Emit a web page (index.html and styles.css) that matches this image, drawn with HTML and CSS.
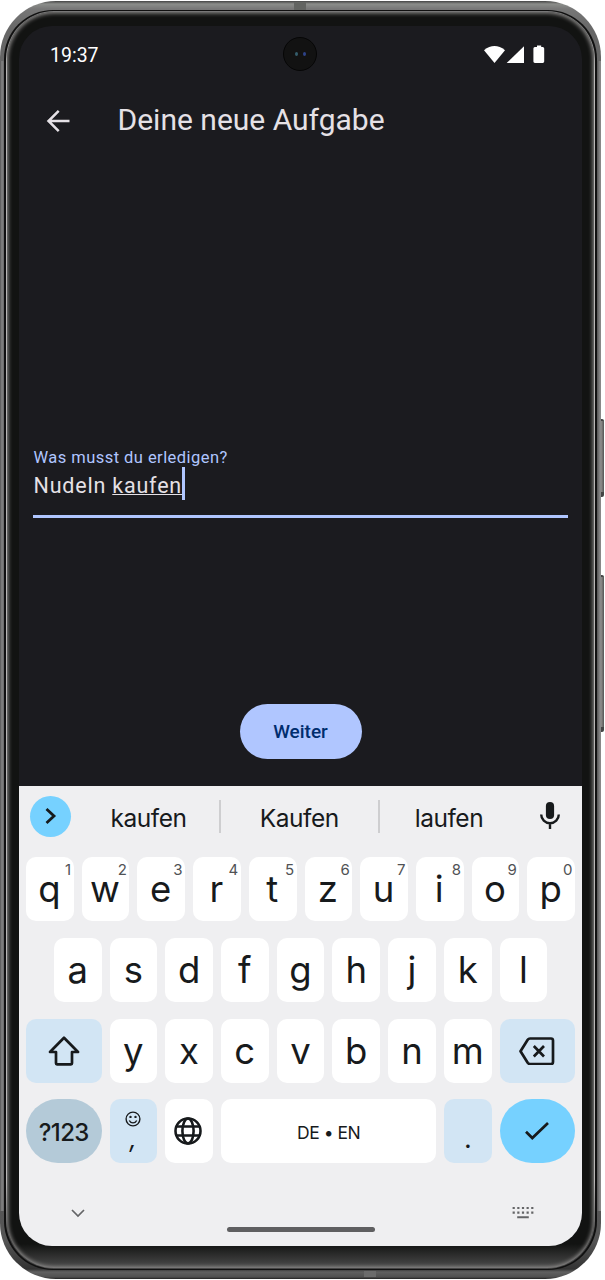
FILE: index.html
```html
<!DOCTYPE html>
<html lang="de">
<head>
<meta charset="utf-8">
<title>Deine neue Aufgabe</title>
<link rel="stylesheet" href="styles.css">
</head>
<body>
<div class="stage">
<div class="side-button power"></div>
<div class="side-button volume"></div>
<div class="phone"><span class="antenna top"></span><span class="antenna base"></span><div class="seam"><div class="rim"><div class="bezel">
<main class="screen">
  <div class="camera"><i></i><i></i></div>
  <header class="status">
    <span class="clock">19:37</span>
    <svg class="status-icons" width="62" height="20" viewBox="0 0 62 20" fill="#fff">
      <path d="M0 5.2Q10.500-3.200 21 5.200L10.500 18Z"/><path d="M40 1.200V18H22.700Z"/>
      <path d="M53 .400h4.200v1.500h1.500q1.500 0 1.500 1.500v13.200q0 1.400-1.500 1.400h-7.800q-1.500 0-1.500-1.400V3.400q0-1.500 1.500-1.500H53z"/>
    </svg>
  </header>
  <div class="appbar">
    <svg width="24" height="24" viewBox="0 0 24 24" fill="none" stroke="#e5e1e6" stroke-width="2.500"><path d="M23.500 12H3M12.700 1.800L2.500 12l10.200 10.200"/></svg>
    <h1>Deine neue Aufgabe</h1>
  </div>
  <section class="form">
    <div class="field">
      <label class="label">Was musst du erledigen?</label>
      <div class="value"><span class="typed">Nudeln <span class="composing">kaufen</span></span><span class="caret"></span></div>
    </div>
    <button class="next">Weiter</button>
  </section>
  <section class="keyboard">
    <div class="suggestions">
      <span class="expand"><svg width="12" height="18" viewBox="0 0 12 18" fill="none" stroke="#171a1c" stroke-width="2.800"><path d="M1.500 2L9 9l-7.500 7"/></svg></span>
      <span class="word">kaufen</span><span class="word">Kaufen</span><span class="word">laufen</span>
      <svg class="mic" width="20" height="28" viewBox="0 0 20 28"><rect x="5.900" y="0" width="8.200" height="17" rx="4.100" fill="#171a1c"/><path d="M1.200 12.500a8.800 8.800 0 0 0 17.600 0M10 21v6" fill="none" stroke="#171a1c" stroke-width="2.400"/></svg>
    </div>
    <div class="row">
      <div class="key">q<sup>1</sup></div><div class="key">w<sup>2</sup></div><div class="key">e<sup>3</sup></div><div class="key">r<sup>4</sup></div><div class="key">t<sup>5</sup></div><div class="key">z<sup>6</sup></div><div class="key">u<sup>7</sup></div><div class="key">i<sup>8</sup></div><div class="key">o<sup>9</sup></div><div class="key">p<sup>0</sup></div>
    </div>
    <div class="row inset">
      <div class="key">a</div><div class="key">s</div><div class="key">d</div><div class="key">f</div><div class="key">g</div><div class="key">h</div><div class="key">j</div><div class="key">k</div><div class="key">l</div>
    </div>
    <div class="row">
      <div class="key wide tint"><svg width="32" height="30" viewBox="0 0 32 30" fill="none" stroke="#171a1c" stroke-width="2.700" stroke-linejoin="round"><path d="M16 1.800L30 16H24V27.300q0 1-1 1H9q-1 0-1-1V16H2Z"/></svg></div>
      <div class="key">y</div><div class="key">x</div><div class="key">c</div><div class="key">v</div><div class="key">b</div><div class="key">n</div><div class="key">m</div>
      <div class="key wide tint"><svg width="36" height="28" viewBox="0 0 36 28" fill="none" stroke="#171a1c" stroke-width="2.700" stroke-linejoin="round"><path d="M11 1.500H32q2 0 2 2V25q0 2-2 2H11q-1.500 0-2.300-1.200L1.500 14.200 8.700 2.700Q9.500 1.500 11 1.500Z"/><path d="M14.800 9L25 19.500M25 9L14.800 19.500"/></svg></div>
    </div>
    <div class="row">
      <div class="key wide symbols">?123</div>
      <div class="key tint comma"><svg width="16" height="16" viewBox="0 0 16 16" fill="none" stroke="#171a1c" stroke-width="1.400"><circle cx="8" cy="8" r="6.900"/><path d="M4.300 9.500a4.100 4.100 0 0 0 7.400 0"/><circle cx="5.500" cy="5.900" r=".5"/><circle cx="10.500" cy="5.900" r=".5"/></svg><span>,</span></div>
      <div class="key globe"><svg width="28" height="28" viewBox="0 0 28 28" fill="none" stroke="#171a1c" stroke-width="2.600"><circle cx="14" cy="14" r="12.500"/><ellipse cx="14" cy="14" rx="5.600" ry="12.500"/><path d="M2 9.500H26M2 18.500H26"/></svg></div>
      <div class="key space">DE • EN</div>
      <div class="key tint period">.</div>
      <div class="key wide enter"><svg width="26" height="20" viewBox="0 0 26 20" fill="none" stroke="#171a1c" stroke-width="2.700"><path d="M2 10.700L8.300 17 24 2"/></svg></div>
    </div>
    <div class="bottom">
      <svg class="hide" width="14" height="9" viewBox="0 0 14 9" fill="none" stroke="#646567" stroke-width="1.700"><path d="M1 1l6 6 6-6"/></svg>
      <span class="home"></span>
      <svg class="switch" width="22" height="13" viewBox="0 0 22 13" fill="none" stroke="#646567" stroke-width="2.200"><path d="M.600 2H22M.600 6.700H22" stroke-dasharray="2.200 2.450"/><path d="M5.200 11.200H16.800" stroke-width="2"/></svg>
    </div>
  </section>
</main>
</div></div></div></div>
</div>
</body>
</html>
```
FILE: styles.css
```css
* { box-sizing: border-box; }
body { margin: 0; background: #fff; font-family: Roboto, "Liberation Sans", sans-serif; }
.stage { position: relative; width: 605px; height: 1280px; padding: 1px 4px 1px 0; overflow: hidden; }
.side-button { position: absolute; left: 599px; width: 5px; border-radius: 2px; background: linear-gradient(90deg, #333, #8b8987 45%, #555); border: solid #444; border-width: 2px 0 5px; }
.power { top: 419px; height: 78px; }
.volume { top: 575px; height: 157px; }
.phone { position: relative; height: 1278px; padding: 9px 4px 9px 4px; border-radius: 56px; background: linear-gradient(90deg, #555 0, #858585 2px, #666 4px, transparent 5px, transparent 596px, #555 597px, #888 600px) 0 60px / 100% 1150px no-repeat, linear-gradient(#444 0, #8b8d8a 3px, #777 8px, #666 30px, #555 1240px, #333 1268px, #606060 1271px, #505050 1276px, #222); }
.antenna { position: absolute; width: 12px; background: #626461; }
.top { left: 294px; top: 1px; height: 8px; }
.base { left: 364px; bottom: 2px; height: 6px; background: #6b6b6b; }
.seam { height: 100%; padding: 1px 2px 1px 1.500px; border-radius: 49px; background: #101010; }
.rim { height: 100%; padding: 1px; border-radius: 48px; background: linear-gradient(#777 0, #777 20px, #b9b7b6 60px, #b9b7b6 1170px, #444 1230px); }
.bezel { height: 100%; padding: 14px 7px 20px 12.500px; border-radius: 47px; background: linear-gradient(#121312 1232px, #4c4c4c 1256px); box-shadow: inset 0 0 4px 1px #989695; }
.screen { position: relative; width: 563px; height: 1220px; border-radius: 33px; overflow: hidden; background: #1b1b1f; display: flex; flex-direction: column; }
.camera { position: absolute; left: 264px; top: 11px; width: 34px; height: 34px; border-radius: 50%; background: #121212; border: 1px solid #060606; display: flex; justify-content: center; align-items: center; gap: 5px; }
.camera i { width: 3px; height: 4px; border-radius: 50%; background: #355d6b; }
.camera i + i { background: #2e4388; }
.status { height: 58px; padding: 0 37px 0 31px; display: flex; justify-content: space-between; align-items: center; color: #fff; }
.clock { font-size: 19.500px; }
.status-icons { margin-right: -.500px; }
.appbar { height: 73px; padding: 1px 0 0 26.500px; display: flex; align-items: center; gap: 48px; }
h1 { margin: -1px 0 0; font-size: 30px; line-height: 36px; font-weight: 400; color: #e5e1e6; }
.form { height: 629px; padding: 291px 14px 0; display: flex; flex-direction: column; align-items: center; }
.field { width: 100%; height: 70px; border-bottom: 3px solid #b0c6ff; }
.label { display: block; padding-left: .5px; font-size: 16.500px; line-height: 19px; letter-spacing: .45px; color: #b0c6ff; }
.value { display: flex; height: 33px; padding-left: .500px; color: #e5e1e6; font-size: 21.500px; line-height: 37px; letter-spacing: .8px; }
.typed { white-space: pre; }
.composing { text-decoration: underline; text-decoration-thickness: 1px; text-underline-offset: 1px; text-decoration-skip-ink: none; }
.caret { width: 3px; height: 33px; background: #b0c6ff; }
.next { margin-top: 186px; width: 122px; height: 55px; border: 0; border-radius: 28px; background: #b0c6ff; color: #002d6e; font: 500 19px Roboto, sans-serif; padding: 0; }
.keyboard { flex: 1; background: #efeff1; padding: 0 7px 0 7px; font-family: Inter, "Noto Sans", sans-serif; color: #171a1c; }
.suggestions { height: 71.500px; padding: 10px 15px 0 4px; display: flex; align-items: flex-start; }
.expand { width: 41px; height: 41px; border-radius: 50%; background: #76d1ff; display: flex; align-items: center; justify-content: center; padding-left: 1.500px; flex-shrink: 0; }
.word { width: 158.500px; height: 33px; margin-top: 4px; text-align: center; font-size: 24.500px; line-height: 36px; letter-spacing: -.5px; flex-shrink: 0; }
.word + .word { border-left: 2px solid #ceced0; }
.word:nth-child(2) { width: 148px; padding-left: 7px; }
.word:last-of-type { width: 141px; }
.mic { margin: 6px 0 0 auto; }
.row { height: 64px; margin-bottom: 16.650px; display: flex; gap: 8px; }
.inset { padding: 0 27.800px; }
.key { position: relative; flex: 1; height: 64px; border-radius: 10px; background: #fff; display: flex; align-items: center; justify-content: center; font-size: 36.500px; line-height: 64px; }
.row:nth-child(2) .key { padding-right: 1px; }
.key sup { position: absolute; right: 2.500px; top: 4px; font-size: 15px; line-height: 17px; color: #505255; }
.wide { flex: 0 0 75.500px; }
.tint { background: #d2e5f4; }
.symbols { background: #b4cad8; border-radius: 32px; font-size: 24px; font-weight: 500; letter-spacing: -.6px; padding-top: 3px; }
.comma { flex-direction: column; justify-content: flex-start; padding-top: 12px; }
.comma span { font-size: 25px; line-height: 24px; font-style: italic; }
.globe { padding-right: 1px; }
.space { flex: 0 0 215.500px; font-size: 17.500px; letter-spacing: -.5px; padding-top: 4px; }
.period { font-size: 27px; padding-top: 15px; }
.enter { background: #76d1ff; border-radius: 32px; }
.bottom { height: 66px; display: flex; justify-content: space-between; align-items: flex-start; padding: 29px 41px 0 45px; }
.home { width: 148px; height: 5px; margin-top: 17.500px; position: relative; left: 2px; border-radius: 3px; background: #5f5f61; }
.switch { margin-top: -3px; }
```
